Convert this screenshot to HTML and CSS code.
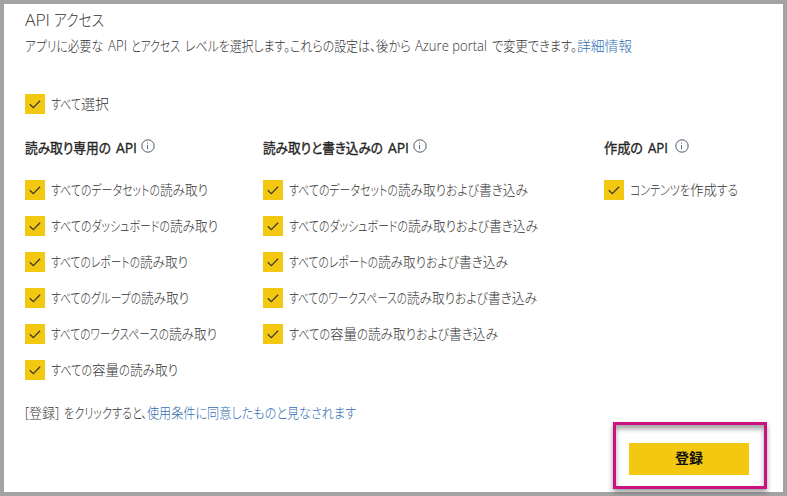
FILE: index.html
```html
<!DOCTYPE html>
<html lang="ja">
<head>
<meta charset="utf-8">
<title>API アクセス</title>
<link rel="stylesheet" href="styles.css">
</head>
<body>
<svg width="0" height="0" class="defs">
  <symbol id="check" viewBox="0 0 20 20"><path d="M4.8 10.2 8.3 13.6 15.1 6.7" fill="none" stroke="#3b3a32" stroke-width="1.3"/></symbol>
  <symbol id="info" viewBox="0 0 14 14"><circle cx="7" cy="7" r="6.2" fill="none" stroke="#4f5561" stroke-width="1"/><path d="M6.5 6V10.3M6.5 3.6V4.7" fill="none" stroke="#5375a0" stroke-width="1"/></symbol>
</svg>
<main class="frame">
  <h1 class="title"><span data-w="25">API</span><span data-w="50">アクセス</span></h1>
  <p class="line intro"><span class="sp" data-w="78">アプリに必要な</span><span class="sp" data-w="19">API</span><span class="sp" data-w="49">とアクセス</span><span data-w="105">レベルを選択します。</span><span data-w="86">これらの設定は、</span><span class="sp" data-w="35">後から</span><span class="sp" data-w="72">Azure portal</span><span data-w="85">で変更できます。</span><a data-w="55">詳細情報</a></p>
  <label class="item all"><svg class="box"><use href="#check"/></svg><span data-w="30">すべて</span><span data-w="28">選択</span></label>
  <div class="columns">
    <section class="col">
      <h2><span class="sp" data-w="86">読み取り専用の</span><span data-w="21">API</span><svg class="info"><use href="#info"/></svg></h2>
      <label class="item"><svg class="box"><use href="#check"/></svg><span data-w="109">すべてのデータセットの</span><span data-w="48">読み取り</span></label>
      <label class="item"><svg class="box"><use href="#check"/></svg><span data-w="119">すべてのダッシュボードの</span><span data-w="48">読み取り</span></label>
      <label class="item"><svg class="box"><use href="#check"/></svg><span data-w="89">すべてのレポートの</span><span data-w="48">読み取り</span></label>
      <label class="item"><svg class="box"><use href="#check"/></svg><span data-w="90">すべてのグループの</span><span data-w="48">読み取り</span></label>
      <label class="item"><svg class="box"><use href="#check"/></svg><span data-w="118">すべてのワークスペースの</span><span data-w="48">読み取り</span></label>
      <label class="item"><svg class="box"><use href="#check"/></svg><span data-w="41">すべての</span><span data-w="27">容量</span><span data-w="11">の</span><span data-w="48">読み取り</span></label>
    </section>
    <section class="col">
      <h2><span class="sp" data-w="120">読み取りと書き込みの</span><span data-w="21">API</span><svg class="info"><use href="#info"/></svg></h2>
      <label class="item"><svg class="box"><use href="#check"/></svg><span data-w="109">すべてのデータセットの</span><span data-w="48">読み取り</span><span data-w="33">および</span><span data-w="49">書き込み</span></label>
      <label class="item"><svg class="box"><use href="#check"/></svg><span data-w="119">すべてのダッシュボードの</span><span data-w="48">読み取り</span><span data-w="33">および</span><span data-w="49">書き込み</span></label>
      <label class="item"><svg class="box"><use href="#check"/></svg><span data-w="89">すべてのレポートの</span><span data-w="48">読み取り</span><span data-w="33">および</span><span data-w="49">書き込み</span></label>
      <label class="item"><svg class="box"><use href="#check"/></svg><span data-w="118">すべてのワークスペースの</span><span data-w="48">読み取り</span><span data-w="33">および</span><span data-w="49">書き込み</span></label>
      <label class="item"><svg class="box"><use href="#check"/></svg><span data-w="41">すべての</span><span data-w="27">容量</span><span data-w="11">の</span><span data-w="48">読み取り</span><span data-w="33">および</span><span data-w="49">書き込み</span></label>
    </section>
    <section class="col">
      <h2><span class="sp" data-w="39">作成の</span><span data-w="20">API</span><svg class="info wide"><use href="#info"/></svg></h2>
      <label class="item"><svg class="box"><use href="#check"/></svg><span data-w="60">コンテンツを</span><span data-w="27">作成</span><span data-w="21">する</span></label>
    </section>
  </div>
  <p class="line terms"><span class="sp" data-w="34">[登録]</span><span data-w="83">をクリックすると、</span><a data-w="209">使用条件に同意したものと見なされます</a></p>
  <div class="callout"><button type="button">登録</button></div>
</main>
<script src="fit.js"></script>
</body>
</html>
```
FILE: styles.css
```css
* { box-sizing: border-box; }
body { margin: 0; }
.defs { position: absolute; }
.frame {
  width: 787px;
  height: 496px;
  padding: 6px 0 0 21px;
  border: 4px solid #a3a3a3;
  background: #fff;
  color: #333;
  font: 300 14px/20px "Open Sans", "Noto Sans CJK JP", sans-serif;
  font-feature-settings: "palt";
  white-space: nowrap;
}
h1, h2, p { margin: 0; font-weight: 300; }
.title, .line, .item, h2 { display: flex; align-items: center; }
[data-w] { flex: none; transform-origin: 0 50%; }
.title { height: 20px; gap: 4px; font-size: 16px; color: #333; }
.line { height: 20px; }
.intro { margin-top: 6px; }
a { color: #2f6db0; }
.item { height: 20px; color: #333; }
.all { margin-top: 38px; }
.box { width: 20px; height: 20px; margin-right: 6px; background: #f2c811; flex: none; }
.columns { display: grid; grid-template-columns: 238px 341px 1fr; margin-top: 24px; }
.col { display: flex; flex-direction: column; gap: 16px; }
h2 { height: 22px; margin-bottom: 6px; margin-top: -2px; padding-top: 2px; font-size: 14px; font-weight: 400; color: #252525; -webkit-text-stroke: .35px #252525; }
.info { width: 14px; height: 14px; margin: -4px 0 0 4px; }
.wide { margin-left: 7px; }
.terms { margin-top: 23px; }
.callout {
  position: absolute;
  left: 613px;
  top: 422px;
  width: 154px;
  height: 67px;
  padding: 18px 13px;
  border: 3px solid #c9117f;
  box-shadow: 0 3px 5px rgba(0, 0, 0, .4), inset 0 4px 5px rgba(0, 0, 0, .35);
}
button {
  display: block;
  width: 120px;
  height: 32px;
  padding: 0 0 4px;
  border: 0;
  background: #f2c811;
  color: #111;
  font: 700 14px/20px "Noto Sans CJK JP", sans-serif;
}
```
FILE: fit.js
```js
document.querySelectorAll("[data-w]").forEach(function (el) {
  var target = Number(el.dataset.w);
  var natural = el.getBoundingClientRect().width;
  var gap = el.classList.contains("sp") ? 4.6 : 0;
  el.style.transform = "scaleX(" + target / natural + ")";
  el.style.marginRight = target - natural + gap + "px";
});
```
